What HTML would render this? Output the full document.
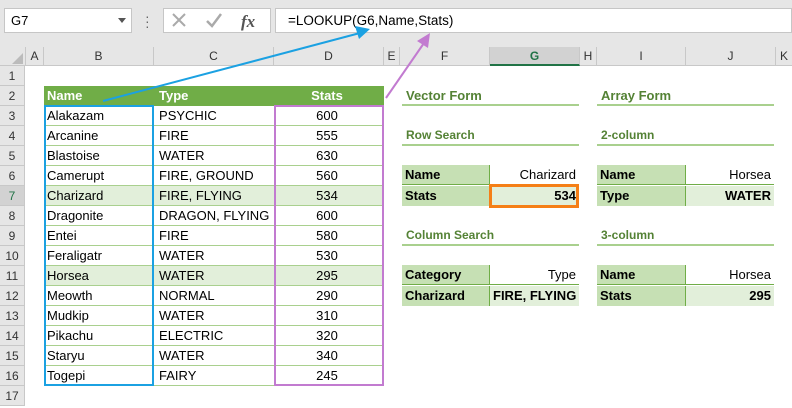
<!DOCTYPE html>
<html><head><meta charset="utf-8"><style>
*{margin:0;padding:0;box-sizing:border-box}
body{width:792px;height:408px;overflow:hidden;background:#fff;font-family:"Liberation Sans",sans-serif;font-size:13px;color:#000;position:relative}
.a{position:absolute}
.top{left:0;top:0;width:792px;height:47px;background:#e6e6e6}
.colh{top:47px;height:19px;background:#e6e6e6;border-right:1px solid #c8c8c8;border-bottom:1px solid #c8c8c8;text-align:center;line-height:19px;color:#333;font-size:12px}
.rowh{left:0;width:25px;height:20px;background:#e6e6e6;border-bottom:1px solid #c8c8c8;border-right:1px solid #c8c8c8;text-align:center;line-height:20px;color:#333;font-size:12px}
.c{height:20px;line-height:20px;padding:0 3px;white-space:nowrap;overflow:hidden;border-bottom:1px solid #a9d08e}
.hd{background:#70ad47;color:#fff;font-weight:bold;border-bottom:none}
.hl{background:#e2efda}
.r{text-align:right}.ce{text-align:center}
.t{color:#548235;font-weight:bold;border-bottom:2px solid #a9d08e;height:20px;line-height:19px;padding-left:4px}
.t1{font-size:13px}.t2{font-size:12px}
.k{background:#c6e0b4;font-weight:bold;border-right:1px solid #70ad47}
.v{background:#fff}
</style></head><body>
<div class="a top"></div>
<div class="a" style="left:4px;top:8px;width:128px;height:25px;background:#fff;border:1px solid #c6c6c6;line-height:23px;padding-left:6px">G7</div>
<div class="a" style="left:118px;top:18px;width:0;height:0;border-left:4px solid transparent;border-right:4px solid transparent;border-top:5px solid #555"></div>
<div class="a" style="left:145px;top:14px;color:#666;font-size:14px;line-height:5px">·<br>·<br>·</div>
<div class="a" style="left:163px;top:8px;width:108px;height:25px;background:#fff;border:1px solid #c6c6c6"></div>
<svg class="a" style="left:163px;top:8px" width="108" height="25"><path d="M10 6 L22 18 M22 6 L10 18" stroke="#aaa" stroke-width="2" fill="none"/><path d="M44 13 L49 18 L58 6" stroke="#aaa" stroke-width="2.5" fill="none"/><text x="78" y="19" font-family="Liberation Serif" font-style="italic" font-weight="bold" font-size="17" fill="#555">fx</text></svg>
<div class="a" style="left:275px;top:8px;width:517px;height:25px;background:#fff;border:1px solid #c6c6c6;line-height:23px;padding-left:12px;font-size:13.5px">=LOOKUP(G6,Name,Stats)</div>

<div class="a colh" style="left:0;width:26px"></div>
<svg class="a" style="left:12px;top:53px" width="12" height="12"><path d="M11 0 L11 11 L0 11Z" fill="#bbb"/></svg>
<div class="a colh" style="left:26px;width:18px">A</div>
<div class="a colh" style="left:44px;width:110px">B</div>
<div class="a colh" style="left:154px;width:120px">C</div>
<div class="a colh" style="left:274px;width:110px">D</div>
<div class="a colh" style="left:384px;width:16px">E</div>
<div class="a colh" style="left:400px;width:90px">F</div>
<div class="a colh" style="left:490px;width:90px;background:#d2d2d2;color:#217346;font-weight:bold;border-bottom:2px solid #217346">G</div>
<div class="a colh" style="left:580px;width:17px">H</div>
<div class="a colh" style="left:597px;width:89px">I</div>
<div class="a colh" style="left:686px;width:90px">J</div>
<div class="a colh" style="left:776px;width:16px;border-right:none">K</div>

<div class="a rowh" style="top:66px">1</div><div class="a rowh" style="top:86px">2</div><div class="a rowh" style="top:106px">3</div><div class="a rowh" style="top:126px">4</div><div class="a rowh" style="top:146px">5</div><div class="a rowh" style="top:166px">6</div><div class="a rowh" style="top:186px;background:#d2d2d2;color:#217346">7</div><div class="a rowh" style="top:206px">8</div><div class="a rowh" style="top:226px">9</div><div class="a rowh" style="top:246px">10</div><div class="a rowh" style="top:266px">11</div><div class="a rowh" style="top:286px">12</div><div class="a rowh" style="top:306px">13</div><div class="a rowh" style="top:326px">14</div><div class="a rowh" style="top:346px">15</div><div class="a rowh" style="top:366px">16</div><div class="a rowh" style="top:386px">17</div>

<div class="a" style="left:44px;top:86px;width:340px">
<div style="display:flex" class="hd c"><div style="width:110px">Name</div><div style="width:120px;padding-left:4px">Type</div><div style="width:110px;text-align:center">Stats</div></div>
<div style="display:flex" class="c"><div style="width:110px">Alakazam</div><div style="width:120px;padding-left:4px">PSYCHIC</div><div style="width:110px" class="ce">600</div></div>
<div style="display:flex" class="c"><div style="width:110px">Arcanine</div><div style="width:120px;padding-left:4px">FIRE</div><div style="width:110px" class="ce">555</div></div>
<div style="display:flex" class="c"><div style="width:110px">Blastoise</div><div style="width:120px;padding-left:4px">WATER</div><div style="width:110px" class="ce">630</div></div>
<div style="display:flex" class="c"><div style="width:110px">Camerupt</div><div style="width:120px;padding-left:4px">FIRE, GROUND</div><div style="width:110px" class="ce">560</div></div>
<div style="display:flex" class="c hl"><div style="width:110px">Charizard</div><div style="width:120px;padding-left:4px">FIRE, FLYING</div><div style="width:110px" class="ce">534</div></div>
<div style="display:flex" class="c"><div style="width:110px">Dragonite</div><div style="width:120px;padding-left:4px">DRAGON, FLYING</div><div style="width:110px" class="ce">600</div></div>
<div style="display:flex" class="c"><div style="width:110px">Entei</div><div style="width:120px;padding-left:4px">FIRE</div><div style="width:110px" class="ce">580</div></div>
<div style="display:flex" class="c"><div style="width:110px">Feraligatr</div><div style="width:120px;padding-left:4px">WATER</div><div style="width:110px" class="ce">530</div></div>
<div style="display:flex" class="c hl"><div style="width:110px">Horsea</div><div style="width:120px;padding-left:4px">WATER</div><div style="width:110px" class="ce">295</div></div>
<div style="display:flex" class="c"><div style="width:110px">Meowth</div><div style="width:120px;padding-left:4px">NORMAL</div><div style="width:110px" class="ce">290</div></div>
<div style="display:flex" class="c"><div style="width:110px">Mudkip</div><div style="width:120px;padding-left:4px">WATER</div><div style="width:110px" class="ce">310</div></div>
<div style="display:flex" class="c"><div style="width:110px">Pikachu</div><div style="width:120px;padding-left:4px">ELECTRIC</div><div style="width:110px" class="ce">320</div></div>
<div style="display:flex" class="c"><div style="width:110px">Staryu</div><div style="width:120px;padding-left:4px">WATER</div><div style="width:110px" class="ce">340</div></div>
<div style="display:flex" class="c"><div style="width:110px">Togepi</div><div style="width:120px;padding-left:4px">FAIRY</div><div style="width:110px" class="ce">245</div></div>
</div>
<div class="a" style="left:44px;top:105px;width:110px;height:281px;border:2px solid #1ba1e2"></div>
<div class="a" style="left:274px;top:105px;width:110px;height:281px;border:2px solid #c27bd0"></div>

<div class="a t t1" style="left:402px;top:86px;width:177px">Vector Form</div>
<div class="a t t1" style="left:597px;top:86px;width:177px">Array Form</div>
<div class="a t t2" style="left:402px;top:126px;width:177px">Row Search</div>
<div class="a t t2" style="left:597px;top:126px;width:177px">2-column</div>
<div class="a t t2" style="left:402px;top:226px;width:177px">Column Search</div>
<div class="a t t2" style="left:597px;top:226px;width:177px">3-column</div>

<div class="a c k" style="left:402px;top:165px;width:88px;border-bottom:1px solid #70ad47">Name</div>
<div class="a c r" style="left:490px;top:165px;width:89px;border-bottom:1px solid #70ad47">Charizard</div>
<div class="a c k" style="left:402px;top:186px;width:88px;border-bottom:none">Stats</div>
<div class="a c r hl" style="left:490px;top:186px;width:89px;font-weight:bold;border-bottom:none">534</div>
<div class="a" style="left:489px;top:184px;width:90px;height:24px;border:3px solid #f57f17"></div>

<div class="a c k" style="left:597px;top:165px;width:89px;border-bottom:1px solid #70ad47">Name</div>
<div class="a c r" style="left:686px;top:165px;width:88px;border-bottom:1px solid #70ad47">Horsea</div>
<div class="a c k" style="left:597px;top:186px;width:89px;border-bottom:none">Type</div>
<div class="a c r hl" style="left:686px;top:186px;width:88px;font-weight:bold;border-bottom:none">WATER</div>

<div class="a c k" style="left:402px;top:265px;width:88px;border-bottom:1px solid #70ad47">Category</div>
<div class="a c r" style="left:490px;top:265px;width:89px;border-bottom:1px solid #70ad47">Type</div>
<div class="a c k" style="left:402px;top:286px;width:88px;border-bottom:none">Charizard</div>
<div class="a c r hl" style="left:490px;top:286px;width:89px;font-weight:bold;border-bottom:none">FIRE, FLYING</div>

<div class="a c k" style="left:597px;top:265px;width:89px;border-bottom:1px solid #70ad47">Name</div>
<div class="a c r" style="left:686px;top:265px;width:88px;border-bottom:1px solid #70ad47">Horsea</div>
<div class="a c k" style="left:597px;top:286px;width:89px;border-bottom:none">Stats</div>
<div class="a c r hl" style="left:686px;top:286px;width:88px;font-weight:bold;border-bottom:none">295</div>

<svg class="a" style="left:0;top:0" width="792" height="408">
<line x1="103" y1="101" x2="360" y2="33" stroke="#1ba1e2" stroke-width="2"/>
<path d="M370 29 L355 26 L359 39Z" fill="#1ba1e2"/>
<line x1="386" y1="98" x2="424" y2="43" stroke="#c27bd0" stroke-width="2"/>
<path d="M430 33 L417 41 L428 48Z" fill="#c27bd0"/>
</svg>
</body></html>
